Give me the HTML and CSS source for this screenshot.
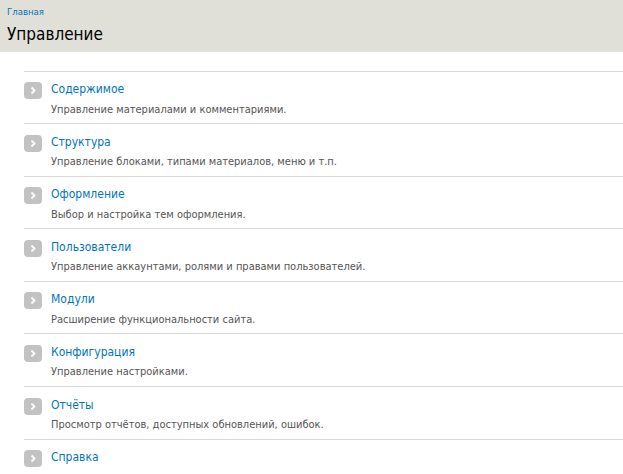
FILE: index.html
```html
<!DOCTYPE html>
<html lang="ru">
<head>
    <meta charset="UTF-8" />
    <title>Управление</title>
    <link rel="stylesheet" href="styles.css">
</head>
<body>
<div class="branding">
    <div class="breadcrumb"><a href="#">Главная</a></div>
    <h1 class="page-title">Управление</h1>
</div>

<div class="page">
    <ul class="admin-list">
        <li>
            <span class="arrow"><svg width="18" height="17" viewBox="0 0 18 17"><path d="M7.5 5.5 L10.5 8.5 L7.5 11.5" fill="none" stroke="#fff" stroke-width="1.8"/></svg></span>
            <div class="item">
                <a href="#">Содержимое</a>
                <div class="description">Управление материалами и комментариями.</div>
            </div>
        </li>
        <li>
            <span class="arrow"><svg width="18" height="17" viewBox="0 0 18 17"><path d="M7.5 5.5 L10.5 8.5 L7.5 11.5" fill="none" stroke="#fff" stroke-width="1.8"/></svg></span>
            <div class="item">
                <a href="#">Структура</a>
                <div class="description">Управление блоками, типами материалов, меню и т.п.</div>
            </div>
        </li>
        <li>
            <span class="arrow"><svg width="18" height="17" viewBox="0 0 18 17"><path d="M7.5 5.5 L10.5 8.5 L7.5 11.5" fill="none" stroke="#fff" stroke-width="1.8"/></svg></span>
            <div class="item">
                <a href="#">Оформление</a>
                <div class="description">Выбор и настройка тем оформления.</div>
            </div>
        </li>
        <li>
            <span class="arrow"><svg width="18" height="17" viewBox="0 0 18 17"><path d="M7.5 5.5 L10.5 8.5 L7.5 11.5" fill="none" stroke="#fff" stroke-width="1.8"/></svg></span>
            <div class="item">
                <a href="#">Пользователи</a>
                <div class="description">Управление аккаунтами, ролями и правами пользователей.</div>
            </div>
        </li>
        <li>
            <span class="arrow"><svg width="18" height="17" viewBox="0 0 18 17"><path d="M7.5 5.5 L10.5 8.5 L7.5 11.5" fill="none" stroke="#fff" stroke-width="1.8"/></svg></span>
            <div class="item">
                <a href="#">Модули</a>
                <div class="description">Расширение функциональности сайта.</div>
            </div>
        </li>
        <li>
            <span class="arrow"><svg width="18" height="17" viewBox="0 0 18 17"><path d="M7.5 5.5 L10.5 8.5 L7.5 11.5" fill="none" stroke="#fff" stroke-width="1.8"/></svg></span>
            <div class="item">
                <a href="#">Конфигурация</a>
                <div class="description">Управление настройками.</div>
            </div>
        </li>
        <li>
            <span class="arrow"><svg width="18" height="17" viewBox="0 0 18 17"><path d="M7.5 5.5 L10.5 8.5 L7.5 11.5" fill="none" stroke="#fff" stroke-width="1.8"/></svg></span>
            <div class="item">
                <a href="#">Отчёты</a>
                <div class="description">Просмотр отчётов, доступных обновлений, ошибок.</div>
            </div>
        </li>
        <li>
            <span class="arrow"><svg width="18" height="17" viewBox="0 0 18 17"><path d="M7.5 5.5 L10.5 8.5 L7.5 11.5" fill="none" stroke="#fff" stroke-width="1.8"/></svg></span>
            <div class="item">
                <a href="#">Справка</a>
            </div>
        </li>
    </ul>
</div>
</body>
</html>
```

FILE: styles.css
```css
body {
    margin: 0;
    padding: 0;
    font-family: "DejaVu Sans Condensed", "DejaVu Sans", Verdana, sans-serif;
    background-color: #fff;
    color: #333;
    overflow: hidden;
}

a {
    color: #0074bd;
    text-decoration: none;
}

.branding {
    background-color: #e0e0d8;
    height: 52px;
    padding: 0 7px;
    box-sizing: border-box;
}

.breadcrumb {
    padding-top: 5px;
    font-size: 9.5px;
    line-height: 13px;
}

.page-title {
    margin: 0;
    padding-top: 4px;
    font-size: 17px;
    font-weight: normal;
    line-height: 24px;
    color: #000;
}

.page {
    padding: 18.5px 0 0 24px;
}

.admin-list {
    list-style: none;
    margin: 0;
    padding: 0;
}

.admin-list li {
    display: flex;
    border-top: 1px solid #d8d8d8;
    padding: 8.5px 0 5.6px 0;
}

.arrow {
    display: block;
    width: 18px;
    height: 17px;
    margin: 2px 9px 0 0;
    background-color: #c2c2c2;
    border-radius: 4px;
}

.arrow svg {
    display: block;
}

.item a {
    display: block;
    font-size: 12px;
    line-height: 18px;
}

.description {
    margin-top: 3.5px;
    font-size: 11px;
    line-height: 16px;
    color: #555;
}
```
